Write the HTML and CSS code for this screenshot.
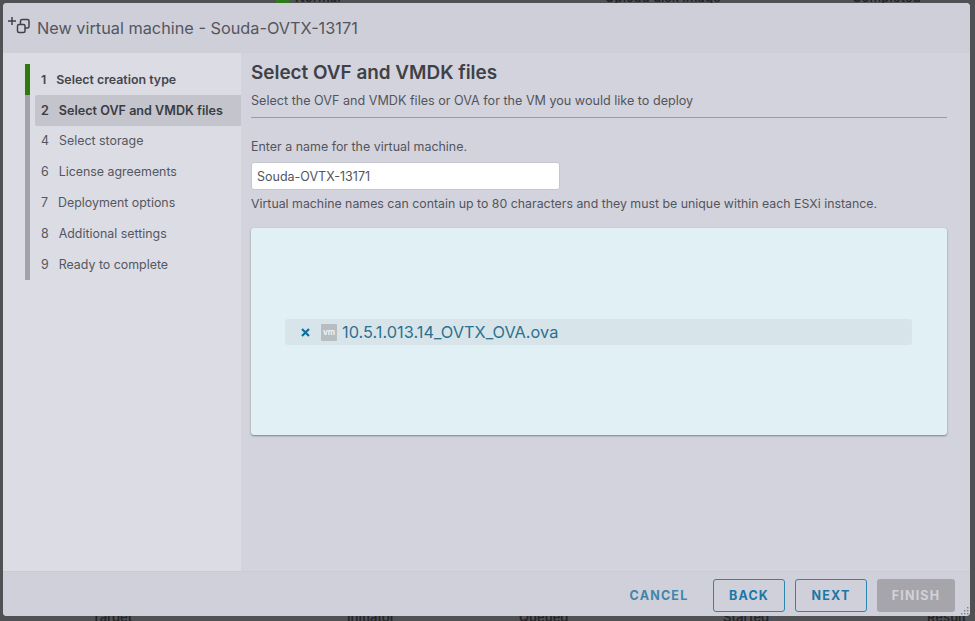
FILE: index.html
```html
<!DOCTYPE html>
<html>
<head>
    <title>New virtual machine</title>
    <link rel="stylesheet" href="styles.css">
</head>
<body>

<div class="backdrop-text top-text">
    <span>Normal</span>
    <span>Upload disk image</span>
    <span>Completed</span>
</div>
<div class="status-dot"></div>

<div class="modal">
    <div class="modal-header">
        <svg class="title-icon" width="26" height="24" viewBox="0 0 26 24" fill="none" stroke="#3f4148" stroke-width="1.5">
            <path d="M1 7h8M5 3v8"/>
            <rect x="13.5" y="5.5" width="8.5" height="8.5" rx="1.5"/>
            <rect x="10.5" y="10.5" width="7.5" height="8" rx="1.5" fill="#cfcfd9"/>
        </svg>
        <h1>New virtual machine - Souda-OVTX-13171</h1>
    </div>

    <div class="modal-body">
        <div class="sidebar">
            <ul class="steps">
                <li class="step done"><span class="num">1</span>Select creation type</li>
                <li class="step active"><span class="num">2</span>Select OVF and VMDK files</li>
                <li class="step"><span class="num">4</span>Select storage</li>
                <li class="step"><span class="num">6</span>License agreements</li>
                <li class="step"><span class="num">7</span>Deployment options</li>
                <li class="step"><span class="num">8</span>Additional settings</li>
                <li class="step"><span class="num">9</span>Ready to complete</li>
            </ul>
        </div>

        <div class="content">
            <h2>Select OVF and VMDK files</h2>
            <p class="subtitle">Select the OVF and VMDK files or OVA for the VM you would like to deploy</p>

            <label class="name-label" for="vmName">Enter a name for the virtual machine.</label>
            <input class="name-input" id="vmName" type="text" value="Souda-OVTX-13171">
            <p class="hint">Virtual machine names can contain up to 80 characters and they must be unique within each ESXi instance.</p>

            <div class="dropzone">
                <div class="file-row">
                    <svg class="remove" width="9" height="9" viewBox="0 0 9 9" stroke="#0f6f9f" stroke-width="2.2">
                        <path d="M1 1l7 7M8 1l-7 7"/>
                    </svg>
                    <span class="vm-badge">vm</span>
                    <span class="file-name">10.5.1.013.14_OVTX_OVA.ova</span>
                </div>
            </div>
        </div>
    </div>

    <div class="modal-footer">
        <button class="btn btn-link">CANCEL</button>
        <button class="btn btn-outline">BACK</button>
        <button class="btn btn-outline">NEXT</button>
        <button class="btn btn-disabled">FINISH</button>
    </div>

    <svg class="resize-grip" width="8" height="8" viewBox="0 0 8 8" fill="#7d8087">
        <rect x="6" y="0" width="1.4" height="1.4"/>
        <rect x="3" y="3" width="1.4" height="1.4"/>
        <rect x="6" y="3" width="1.4" height="1.4"/>
        <rect x="0" y="6" width="1.4" height="1.4"/>
        <rect x="3" y="6" width="1.4" height="1.4"/>
        <rect x="6" y="6" width="1.4" height="1.4"/>
    </svg>
</div>

<div class="backdrop-text bottom-text">
    <span>Target</span>
    <span>Initiator</span>
    <span>Queued</span>
    <span>Started</span>
    <span>Result</span>
</div>

</body>
</html>
```

FILE: styles.css
```css
html, body {
    margin: 0;
    height: 100%;
}

body {
    width: 975px;
    height: 621px;
    overflow: hidden;
    position: relative;
    background: #505155;
    font-family: 'Inter', 'Lato', sans-serif;
    color: #53555c;
    box-sizing: border-box;
    padding: 3px 5px 5px 3px;
}

.backdrop-text {
    position: absolute;
    left: 0;
    width: 975px;
    font-size: 13px;
    font-weight: 600;
    color: #232427;
}

.backdrop-text span {
    position: absolute;
    white-space: nowrap;
}

.top-text {
    top: -11px;
}

.top-text span:nth-child(1) { left: 295px; }
.top-text span:nth-child(2) { left: 605px; }
.top-text span:nth-child(3) { left: 852px; }

.status-dot {
    position: absolute;
    left: 276px;
    top: -6px;
    width: 13px;
    height: 10px;
    background: #2f7a1c;
}

.bottom-text {
    top: 609px;
}

.bottom-text span:nth-child(1) { left: 92px; }
.bottom-text span:nth-child(2) { left: 347px; }
.bottom-text span:nth-child(3) { left: 519px; }
.bottom-text span:nth-child(4) { left: 723px; }
.bottom-text span:nth-child(5) { left: 927px; }

.modal {
    position: relative;
    z-index: 1;
    display: flex;
    flex-direction: column;
    height: 613px;
    background: #d3d3dd;
    border-radius: 4px;
    overflow: hidden;
}

.modal-header {
    display: flex;
    align-items: center;
    height: 50px;
    flex-shrink: 0;
    background: #cfcfd9;
}

.title-icon {
    margin: -4px 0 0 4px;
}

.modal-header h1 {
    margin: 0 0 0 4px;
    font-size: 16.3px;
    font-weight: 400;
    color: #54565e;
}

.modal-body {
    display: flex;
    flex: 1;
    min-height: 0;
}

.sidebar {
    width: 238px;
    flex-shrink: 0;
    background: #dcdce5;
    padding-top: 11px;
    box-sizing: border-box;
}

.steps {
    list-style: none;
    margin: 0 0 0 22px;
    padding: 0;
    border-left: 5px solid #a2a2a8;
    position: relative;
}

.step {
    display: flex;
    align-items: center;
    height: 30.8px;
    margin-left: 5px;
    padding-left: 6px;
    font-size: 12.4px;
    color: #55575e;
}

.step .num {
    margin-right: 10px;
}

.step.done {
    font-weight: 600;
    color: #44464c;
}

.step.done::before {
    content: "";
    position: absolute;
    left: -5px;
    top: 0;
    width: 5px;
    height: 31px;
    background: #2f7a0c;
}

.step.active {
    font-size: 12.6px;
    font-weight: 600;
    color: #3a3c42;
    background: #c4c4cc;
    border-radius: 2px 0 0 2px;
}

.content {
    flex: 1;
    padding: 9px 23px 0 10px;
    min-width: 0;
}

.content h2 {
    margin: 0;
    font-size: 18.9px;
    line-height: 22px;
    font-weight: 600;
    color: #3f4147;
}

.subtitle {
    margin: 9px 0 0;
    padding-bottom: 8px;
    font-size: 12.6px;
    line-height: 16px;
    border-bottom: 1px solid #9c9ca6;
}

.name-label {
    display: block;
    margin-top: 21px;
    font-size: 12.45px;
    line-height: 16px;
}

.name-input {
    display: block;
    width: 309px;
    height: 28px;
    margin-top: 7px;
    padding: 0 5px;
    box-sizing: border-box;
    border: 1px solid #c6c6cd;
    border-radius: 3px;
    background: #fff;
    font: 12.5px 'Inter', 'Lato', sans-serif;
    color: #53555c;
}

.hint {
    margin: 6px 0 0;
    font-size: 12.35px;
    line-height: 16px;
}

.dropzone {
    display: flex;
    align-items: center;
    height: 207px;
    margin-top: 16px;
    padding: 0 35px 0 34px;
    box-sizing: border-box;
    background: #e1f0f5;
    border-radius: 3px;
    box-shadow: 0 1px 2px rgba(70, 70, 80, 0.6);
}

.file-row {
    display: flex;
    align-items: center;
    flex: 1;
    height: 26px;
    background: #d7e5ea;
    border-radius: 3px;
    margin-top: 1px;
}

.remove {
    margin-left: 16px;
}

.vm-badge {
    width: 16px;
    height: 17px;
    margin-left: 11px;
    background: #b7bdc1;
    border-radius: 1px;
    color: #eef2f3;
    font-size: 8px;
    font-weight: 700;
    line-height: 17px;
    text-align: center;
}

.file-name {
    margin-left: 5px;
    font-size: 16.35px;
    color: #2b7191;
}

.modal-footer {
    display: flex;
    justify-content: flex-end;
    align-items: center;
    gap: 10px;
    height: 45px;
    flex-shrink: 0;
    padding: 3px 15px 0 0;
    box-sizing: border-box;
    background: #d0d0da;
    border-top: 1px solid #cbcbd5;
}

.btn {
    height: 33px;
    box-sizing: border-box;
    border-radius: 3px;
    background: transparent;
    font: 700 12.5px 'Inter', 'Lato', sans-serif;
    letter-spacing: 1.2px;
    padding: 0;
}

.btn-link {
    width: 72px;
    margin-right: 8px;
    border: none;
    color: #3f86ac;
}

.btn-outline {
    width: 72px;
    border: 1px solid #2a85b0;
    color: #1b77a6;
}

.btn-disabled {
    width: 78px;
    border: none;
    background: #a5a5ab;
    color: #d2d2d8;
}

.resize-grip {
    position: absolute;
    right: 1px;
    bottom: 1px;
}
```
